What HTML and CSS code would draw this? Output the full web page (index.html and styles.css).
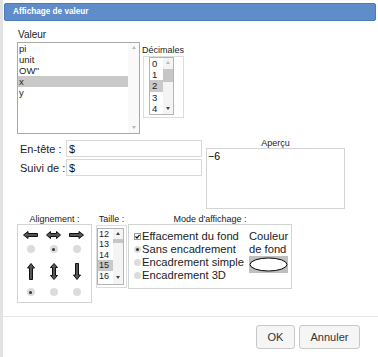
FILE: index.html
```html
<!DOCTYPE html>
<html lang="fr">
<head>
    <meta charset="UTF-8">
    <title>Affichage de valeur</title>
    <link rel="stylesheet" href="styles.css">
</head>
<body>
    <div class="dialog">
        <div class="titlebar">Affichage de valeur</div>

        <div class="content">
            <div class="top-row">
                <div class="valeur">
                    <div class="lbl-valeur">Valeur</div>
                    <div class="listbox main-list">
                        <div class="items">
                            <div class="item">pi</div>
                            <div class="item">unit</div>
                            <div class="item">OW''</div>
                            <div class="item selected">x</div>
                            <div class="item">y</div>
                        </div>
                        <div class="scrollbar">
                            <span class="arr up off"></span>
                            <span class="arr down off"></span>
                        </div>
                    </div>
                </div>
                <div class="decimales">
                    <div class="small-lbl">Décimales</div>
                    <div class="frame dec-frame">
                        <div class="listbox dec-list">
                            <div class="items">
                                <div class="item">0</div>
                                <div class="item">1</div>
                                <div class="item selected">2</div>
                                <div class="item">3</div>
                                <div class="item">4</div>
                            </div>
                            <div class="scrollbar">
                                <span class="arr up off"></span>
                                <span class="thumb"></span>
                                <span class="arr down"></span>
                            </div>
                        </div>
                    </div>
                </div>
            </div>

            <div class="mid-row">
                <div class="fields">
                    <div class="field">
                        <label for="entete">En-tête :</label>
                        <input type="text" id="entete" class="txt" value="$">
                    </div>
                    <div class="field">
                        <label for="suivi">Suivi de :</label>
                        <input type="text" id="suivi" class="txt" value="$">
                    </div>
                </div>
                <div class="apercu">
                    <div class="small-lbl center">Aperçu</div>
                    <div class="preview">−6</div>
                </div>
            </div>

            <div class="bottom-row">
                <div class="align-group">
                    <div class="small-lbl center">Alignement :</div>
                    <div class="align-box">
                        <svg width="15" height="8" viewBox="0 0 15 8"><path d="M0.5 4 L5 0.5 V2.5 H14.5 V5.5 H5 V7.5 Z" fill="#555" stroke="#111"/></svg>
                        <svg width="15" height="8" viewBox="0 0 15 8"><path d="M0.5 4 L4.5 0.5 V2.5 H10.5 V0.5 L14.5 4 L10.5 7.5 V5.5 H4.5 V7.5 Z" fill="#555" stroke="#111"/></svg>
                        <svg width="15" height="8" viewBox="0 0 15 8"><path d="M14.5 4 L10 0.5 V2.5 H0.5 V5.5 H10 V7.5 Z" fill="#555" stroke="#111"/></svg>

                        <span class="radio"></span>
                        <span class="radio on"></span>
                        <span class="radio"></span>

                        <svg class="varrow" width="8" height="17" viewBox="0 0 8 17"><path d="M4 0.5 L7.5 5 H5.5 V16.5 H2.5 V5 H0.5 Z" fill="#555" stroke="#111"/></svg>
                        <svg class="varrow" width="8" height="17" viewBox="0 0 8 17"><path d="M4 0.5 L7.5 4.5 H5.5 V12.5 H7.5 L4 16.5 L0.5 12.5 H2.5 V4.5 H0.5 Z" fill="#555" stroke="#111"/></svg>
                        <svg class="varrow" width="8" height="17" viewBox="0 0 8 17"><path d="M4 16.5 L7.5 12 H5.5 V0.5 H2.5 V12 H0.5 Z" fill="#555" stroke="#111"/></svg>

                        <span class="radio on"></span>
                        <span class="radio"></span>
                        <span class="radio"></span>
                    </div>
                </div>

                <div class="taille-group">
                    <div class="small-lbl center">Taille :</div>
                    <div class="frame taille-frame">
                        <div class="listbox taille-list">
                            <div class="items">
                                <div class="item">12</div>
                                <div class="item">13</div>
                                <div class="item">14</div>
                                <div class="item selected">15</div>
                                <div class="item">16</div>
                            </div>
                            <div class="scrollbar">
                                <span class="arr up"></span>
                                <span class="thumb"></span>
                                <span class="arr down"></span>
                            </div>
                        </div>
                    </div>
                </div>

                <div class="mode-group">
                    <div class="small-lbl center">Mode d'affichage :</div>
                    <div class="mode-box">
                        <div class="options">
                            <div class="opt">
                                <svg class="check" width="7" height="7" viewBox="0 0 7 7"><rect x="0.5" y="0.5" width="6" height="6" fill="#fff" stroke="#999"/><path d="M1.5 3.5 L3 5 L5.5 1.8" fill="none" stroke="#111" stroke-width="1.2"/></svg>
                                Effacement du fond
                            </div>
                            <div class="opt"><span class="radio small on"></span>Sans encadrement</div>
                            <div class="opt"><span class="radio small"></span>Encadrement simple</div>
                            <div class="opt"><span class="radio small"></span>Encadrement 3D</div>
                        </div>
                        <div class="couleur">
                            <div>Couleur</div>
                            <div>de fond</div>
                            <div class="swatch">
                                <svg width="39" height="15" viewBox="0 0 39 15"><ellipse cx="19.5" cy="7.5" rx="18.5" ry="6.5" fill="#fff" stroke="#000"/></svg>
                            </div>
                        </div>
                    </div>
                </div>
            </div>
        </div>

        <div class="sep"></div>

        <div class="footer">
            <button type="button" class="btn btn-ok">OK</button>
            <button type="button" class="btn btn-cancel">Annuler</button>
        </div>
    </div>
</body>
</html>
```

FILE: styles.css
```css
body {
    margin: 0;
    background-color: #e3e3e3;
    font-family: "Liberation Sans", Arial, sans-serif;
    color: #222;
}

.dialog {
    margin-left: 3px;
    width: 375px;
    height: 357px;
    padding-top: 3px;
    box-sizing: border-box;
    background-color: #fff;
    overflow: hidden;
}

.titlebar {
    margin-left: 1px;
    width: 372px;
    height: 18px;
    box-sizing: border-box;
    background-color: #5f8dca;
    border: 1px solid #4a79bd;
    border-radius: 2px;
    color: #fff;
    font-weight: bold;
    font-size: 8.2px;
    line-height: 16px;
    padding-left: 8px;
}

.content {
    padding-left: 14px;
}

/* labels */
.lbl-valeur {
    font-size: 10px;
    line-height: 12px;
    margin-bottom: 1px;
    padding-left: 1px;
}

.small-lbl {
    font-size: 9px;
    line-height: 11px;
    white-space: nowrap;
}

.center {
    text-align: center;
}

/* list boxes */
.listbox {
    display: flex;
    border: 1px solid #a9a9a9;
    background-color: #fff;
    box-sizing: border-box;
}

.items {
    flex: 1;
}

.item {
    font-size: 9.5px;
    line-height: 11px;
    height: 11px;
    padding-left: 1px;
    white-space: nowrap;
}

.item.selected {
    background-color: #c9c9c9;
}

.scrollbar {
    display: flex;
    flex-direction: column;
    background-color: #f4f4f4;
}

.arr {
    display: flex;
    align-items: center;
    justify-content: center;
    height: 9px;
}

.arr::after {
    content: "";
    border-left: 2.5px solid transparent;
    border-right: 2.5px solid transparent;
}

.arr.up::after {
    border-bottom: 3px solid #444;
}

.arr.down::after {
    border-top: 3px solid #444;
}

.arr.off.up::after {
    border-bottom-color: #b8b8b8;
}

.arr.off.down::after {
    border-top-color: #b8b8b8;
}

.arr.down {
    margin-top: auto;
}

.thumb {
    display: block;
    background-color: #c6c6c6;
}

.frame {
    border: 1px solid #dcdcdc;
    box-sizing: border-box;
}

/* top row */
.top-row {
    display: flex;
    margin-top: 8px;
    height: 105px;
}

.main-list {
    width: 123px;
    height: 92px;
}

.main-list .scrollbar {
    width: 11px;
    background-color: #f9f9f9;
    padding-bottom: 2px;
}

.main-list .arr {
    height: 8px;
}

.decimales {
    margin-left: 2px;
    margin-top: 16px;
}

.dec-frame {
    margin-left: 1px;
    width: 41px;
    height: 62px;
    padding-left: 5px;
}

.dec-list {
    width: 25px;
    height: 58px;
    border-color: #b4b4b4;
}

.dec-list .item {
    height: 11.2px;
    line-height: 11.2px;
    padding-left: 2px;
}

.dec-list .scrollbar {
    width: 10px;
    padding-bottom: 1px;
}

.dec-list .thumb {
    margin-top: 2px;
    height: 13px;
}

/* middle row */
.mid-row {
    display: flex;
    margin-top: 4px;
    height: 71px;
}

.fields {
    margin-top: 2px;
    margin-left: 2px;
    display: flex;
    flex-direction: column;
    gap: 2px;
}

.field {
    display: flex;
    align-items: center;
    height: 17px;
}

.field label {
    width: 46px;
    padding-left: 1px;
    font-size: 11px;
    white-space: nowrap;
}

.txt {
    width: 136px;
    height: 17px;
    margin: 0;
    box-sizing: border-box;
    border: 1px solid #d9d9d9;
    padding: 0 2px;
    font-family: "Liberation Sans", Arial, sans-serif;
    font-size: 11px;
    color: #111;
    outline: none;
}

.apercu {
    margin-left: 4px;
}

.apercu .small-lbl {
    line-height: 10px;
}

.preview {
    width: 139px;
    height: 61px;
    box-sizing: border-box;
    border: 1px solid #d4d4d4;
    padding: 2px 0 0 1px;
    font-size: 10.5px;
    line-height: 11px;
    color: #000;
}

/* bottom row */
.bottom-row {
    display: flex;
    align-items: flex-start;
    margin-top: 5px;
}

.bottom-row .small-lbl {
    line-height: 10px;
}

.align-group {
    width: 75px;
}

.align-box {
    width: 75px;
    height: 79px;
    box-sizing: border-box;
    border: 1px solid #d3d3d3;
    padding-left: 1px;
    display: grid;
    grid-template-columns: repeat(3, 23px);
    grid-template-rows: 20px 8px 30px 18px;
    justify-items: center;
    align-items: center;
}

.align-box svg {
    display: block;
}

.align-box .varrow {
    align-self: end;
    margin-bottom: 3px;
}

.radio {
    display: flex;
    align-items: center;
    justify-content: center;
    width: 8px;
    height: 8px;
    border-radius: 50%;
    background-color: #dcdcdc;
}

.radio.on::after {
    content: "";
    width: 3px;
    height: 3px;
    border-radius: 50%;
    background-color: #333;
}

.radio.small {
    width: 7px;
    height: 7px;
    margin-right: 1px;
    flex-shrink: 0;
}

.taille-group {
    margin-left: 4px;
    width: 31px;
}

.taille-frame {
    margin-top: 1px;
    width: 31px;
    height: 63px;
    padding-top: 2px;
}

.taille-list {
    width: 27px;
    height: 57px;
    border-color: #b4b4b4;
}

.taille-list .item {
    font-size: 9px;
    height: 10.4px;
    line-height: 10.4px;
    padding-left: 1px;
}

.taille-list .scrollbar {
    width: 10px;
    padding-bottom: 2px;
}

.taille-list .thumb {
    margin-top: 1px;
    height: 4px;
}

.mode-group {
    margin-left: 1px;
}

.mode-box {
    width: 164px;
    height: 65px;
    box-sizing: border-box;
    border: 1px solid #d3d3d3;
    padding: 5px 3px 0 5px;
    display: flex;
}

.opt {
    display: flex;
    align-items: center;
    height: 13px;
    font-size: 11.2px;
    line-height: 13px;
    white-space: nowrap;
}

.check {
    display: block;
    margin: 0 1px 0 0;
    flex-shrink: 0;
}

.couleur {
    margin-left: auto;
    width: 39px;
    font-size: 11.2px;
    line-height: 13px;
    white-space: nowrap;
}

.swatch {
    height: 17px;
    background-color: #bfbfbf;
    display: flex;
    align-items: center;
    justify-content: center;
}

.swatch svg {
    display: block;
}

/* footer */
.sep {
    margin-top: 13px;
    height: 1px;
    background-color: #e6e6e6;
}

.footer {
    display: flex;
    justify-content: flex-end;
    gap: 4px;
    padding: 8px 18px 0 0;
}

.btn {
    height: 24px;
    padding: 0;
    border: 1px solid #c8c8c8;
    border-radius: 3px;
    background-color: #f5f5f5;
    font-family: "Liberation Sans", Arial, sans-serif;
    font-size: 11px;
    color: #333;
}

.btn-ok {
    width: 39px;
}

.btn-cancel {
    width: 61px;
}
```
